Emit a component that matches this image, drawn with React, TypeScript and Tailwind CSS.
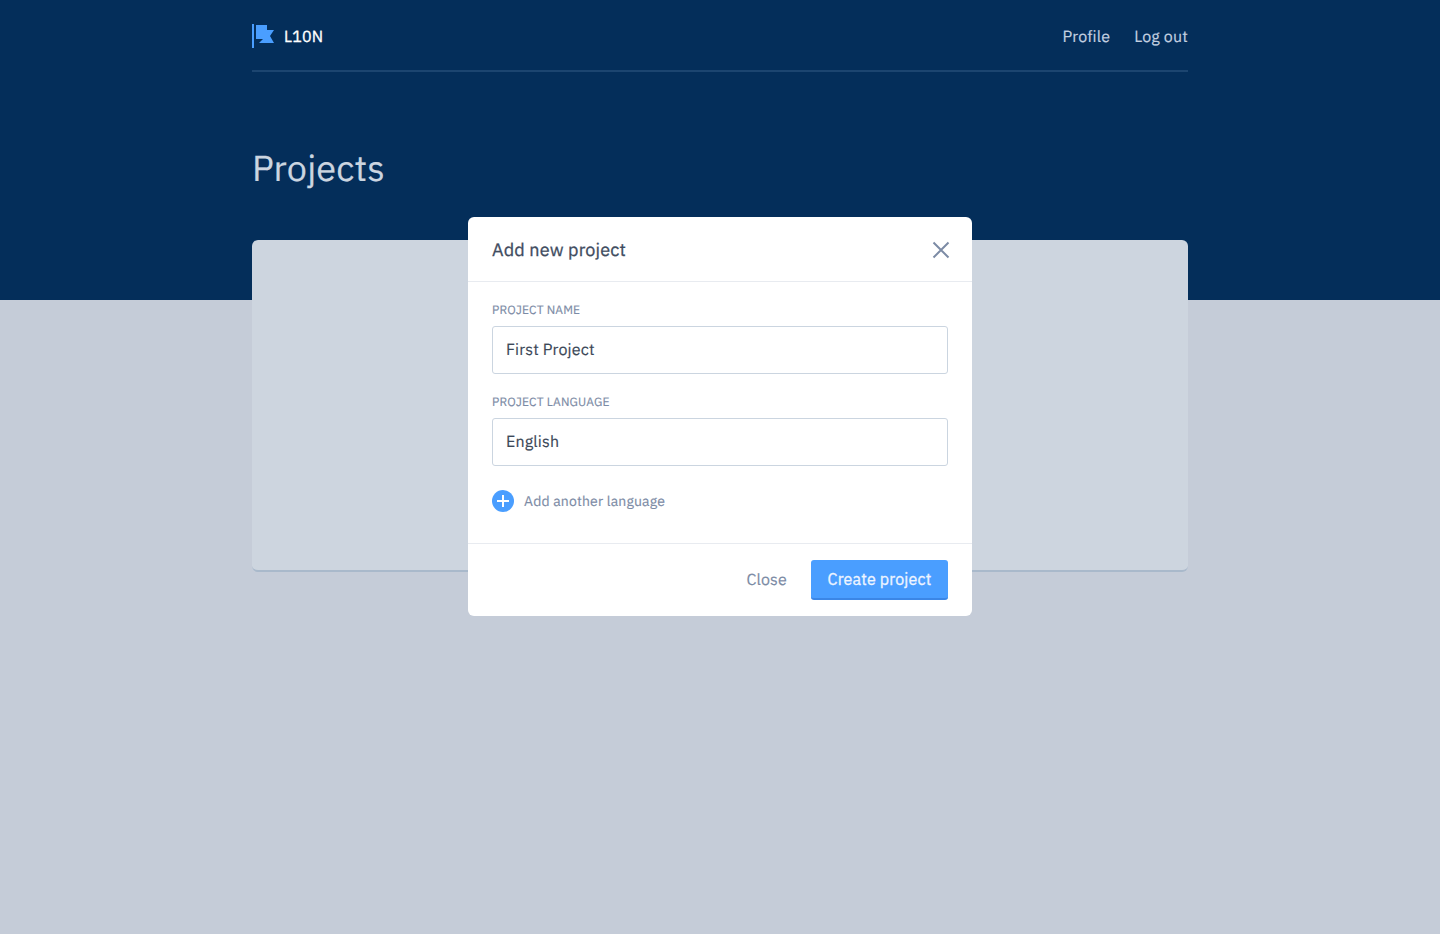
const font = "font-['IBM_Plex_Sans','Roboto','Noto_Sans',sans-serif] [text-rendering:geometricPrecision] antialiased tracking-[0.01em] [-webkit-text-stroke:0.15px]";

function Logo() {
  return (
    <svg width="23" height="24" viewBox="0 0 23 24" className="block">
      <rect x="0" y="0" width="2" height="24" fill="#4a9eff" />
      <path d="M4 1H15V6H22L18 12L22 19H7L11 15H4Z" fill="#4a9eff" />
    </svg>
  );
}

function Field({ label, value }: { label: string; value: string }) {
  return (
    <div>
      <label className="block text-xs leading-4 text-[#7c8ba5] uppercase mb-[7px]">{label}</label>
      <div className="h-12 flex items-center px-[13px] border border-[#cbd5e0] rounded-[3px] text-base text-[#3c4858]">
        {value}
      </div>
    </div>
  );
}

function Modal() {
  return (
    <div className="absolute inset-0 flex justify-center items-start pt-[217px]">
      <div className="w-[504px] bg-white rounded-md">
        <div className="h-[65px] flex items-center justify-between pl-6 pr-[22px] pt-0.5 border-b border-[#e8ebf0]">
          <h3 className="text-lg [-webkit-text-stroke:0.3px] text-[#3f4c5f]">Add new project</h3>
          <svg width="18" height="18" viewBox="0 0 18 18" fill="none" stroke="#7c8ba5" strokeWidth="2">
            <path d="M1.500 1.500l15 15M16.500 1.500l-15 15" />
          </svg>
        </div>
        <div className="px-6 pt-[21px] pb-[31px] border-b border-[#e8ebf0]">
          <div className="flex flex-col gap-[21px]">
            <Field label="Project name" value="First Project" />
            <Field label="Project language" value="English" />
          </div>
          <div className="flex items-center gap-2.5 mt-6">
            <span className="w-[22px] h-[22px] rounded-full bg-[#4a9eff] flex items-center justify-center">
              <svg width="12" height="12" viewBox="0 0 12 12" stroke="#fff" strokeWidth="2">
                <path d="M6 0v12M0 6h12" />
              </svg>
            </span>
            <span className="text-sm text-[#7c8ba5]">Add another language</span>
          </div>
        </div>
        <div className="h-[72px] flex items-center justify-end gap-6 px-6">
          <span className="text-base text-[#7c8ba5]">Close</span>
          <button className="h-10 w-[137px] bg-[#4a9eff] border-b-2 border-[#3b86e6] rounded-[3px] text-base [-webkit-text-stroke:0.3px] text-[#eef5ff]">
            Create project
          </button>
        </div>
      </div>
    </div>
  );
}

export default function App() {
  return (
    <div className={`relative min-h-[934px] bg-[#c5ccd8] ${font}`}>
      <div className="h-[300px] bg-[#042e5a]">
        <div className="w-[936px] mx-auto">
          <nav className="h-[72px] flex items-center justify-between border-b-2 border-[#1c4570]">
            <div className="flex items-center gap-[9px] pt-0.5">
              <Logo />
              <span className="text-base pt-0.5 [-webkit-text-stroke:0.3px] text-white">L10N</span>
            </div>
            <div className="flex gap-6 pt-1 text-base text-[#c3d0e0]">
              <span>Profile</span>
              <span>Log out</span>
            </div>
          </nav>
          <h1 className="mt-[73px] text-4xl leading-[46px] text-[#cbd5e0]">Projects</h1>
        </div>
      </div>
      <div className="w-[936px] mx-auto -mt-[60px]">
        <div className="h-[332px] bg-[#cdd5df] rounded-md border-b-2 border-[#a9b9cb]" />
      </div>
      <Modal />
    </div>
  );
}
